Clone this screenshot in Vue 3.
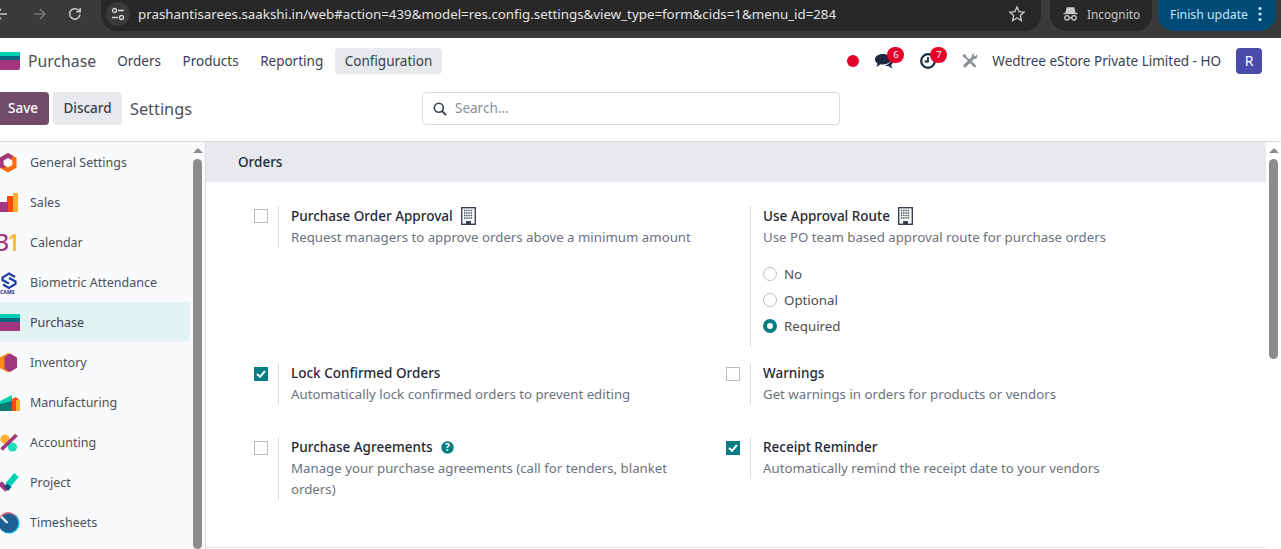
<template>
  <div class="page">
    <div class="browser-bar">
      <div class="nav-btns">
        <svg class="nav-ico back" width="16" height="16" viewBox="0 0 16 16"><path d="M14 8H3M8 3 3 8l5 5" fill="none" stroke="#c7c7c7" stroke-width="1.6"/></svg>
        <svg class="nav-ico forward" width="16" height="16" viewBox="0 0 16 16"><path d="M2 8h11M8 3l5 5-5 5" fill="none" stroke="#757575" stroke-width="1.6"/></svg>
        <svg class="nav-ico reload" width="16" height="16" viewBox="0 0 16 16"><path d="M13 8.500A5.200 5.200 0 1 1 11.600 4.300L13 5.600M13.200 2v3.800H9.400" fill="none" stroke="#c7c7c7" stroke-width="1.6"/></svg>
      </div>
      <div class="url-pill">
        <span class="site-info">
          <svg width="14" height="14" viewBox="0 0 14 14"><g fill="none" stroke="#d5d5d5" stroke-width="1.3"><circle cx="3.500" cy="3.500" r="2"/><path d="M7 3.500h6M1 10.500h6"/><circle cx="10.500" cy="10.500" r="2"/></g></svg>
        </span>
        <span class="url">prashantisarees.saakshi.in/web#action=439&amp;model=res.config.settings&amp;view_type=form&amp;cids=1&amp;menu_id=284</span>
        <svg class="star" width="18" height="18" viewBox="0 0 18 18"><path d="m9 2 2.100 4.700 5 .5-3.800 3.400 1.100 5L9 13l-4.400 2.600 1.100-5L1.900 7.200l5-.5z" fill="none" stroke="#c7c7c7" stroke-width="1.4"/></svg>
      </div>
      <div class="incognito">
        <svg width="15" height="14" viewBox="0 0 15 14"><g fill="none" stroke="#c7c7c7" stroke-width="1.300"><path d="M.5 6.500h14"/><path d="M3 6l1.200-5h6.600L12 6" fill="#c7c7c7"/><circle cx="4" cy="10.800" r="2.200"/><circle cx="11" cy="10.800" r="2.200"/><path d="M6.200 10.800h2.600"/></g></svg>
        <span>Incognito</span>
      </div>
      <div class="finish">
        <span>Finish update</span>
        <svg width="4" height="16" viewBox="0 0 4 16"><g fill="#c2e7ff"><circle cx="2" cy="2.500" r="1.600"/><circle cx="2" cy="8" r="1.600"/><circle cx="2" cy="13.500" r="1.600"/></g></svg>
      </div>
    </div>

    <header class="navbar">
      <svg class="brand-ico" width="20" height="18" viewBox="0 0 20 18"><path d="M0 0h20v4H0z" fill="#00d1b5"/><path d="M0 4h20v4H0z" fill="#0c6680"/><path d="M0 8h20v8a2 2 0 0 1-2 2H0z" fill="#a2367f"/></svg>
      <span class="brand">Purchase</span>
      <nav class="menu">
        <a v-for="m in menus" :key="m" class="menu-item" :class="{ active: m === 'Configuration' }">{{ m }}</a>
      </nav>
      <div class="systray">
        <span class="red-dot"></span>
        <span class="tray-ico chat">
          <svg width="20" height="18" viewBox="0 0 20 18"><path d="M9 2C4.300 2 1 4.300 1 7.500c0 1.700 1 3.100 2.500 4L2.500 15l4-2.700c.8.200 1.600.2 2.500.2 4.500 0 8-2.300 8-5.200S13.500 2 9 2z" fill="#1c2840"/><path d="M17.200 6.500c1.200.8 1.800 1.900 1.800 3.300 0 1.300-.7 2.400-1.800 3.200l.9 3.500-3.800-2.600c-1.300.1-2.600 0-3.700-.5 3.500-.4 6.700-2.900 6.600-6.900z" fill="#1c2840"/></svg>
          <b class="badge">6</b>
        </span>
        <span class="tray-ico clock">
          <svg width="18" height="18" viewBox="0 0 18 18"><circle cx="9" cy="9" r="6.800" fill="none" stroke="#1c2840" stroke-width="2.200"/><path d="M9 5v4.500H5.500" fill="none" stroke="#1c2840" stroke-width="1.800"/></svg>
          <b class="badge">7</b>
        </span>
        <svg class="tools" width="16" height="16" viewBox="0 0 16 16">
          <g fill="#8a8f98">
            <path d="M1.500 1 4 2.200l.6 1.700 9.900 8.800-1.900 2.100L3.300 5.200 1.700 4.600.6 2.200z"/>
            <path d="M15 1.300 12.800 3.500 12 3l-.4-1.200L13.300.6C11.200.2 9.400 1.800 9.800 4l-8 7.800a1.500 1.500 0 0 0 2.200 2.200l8-8c2.200.6 3.900-1.200 3-4.700z"/>
          </g>
        </svg>
        <span class="company">Wedtree eStore Private Limited - HO</span>
        <span class="avatar">R</span>
      </div>
    </header>

    <div class="control-panel">
      <div class="cp-left">
        <button class="btn save"><span>Save</span></button>
        <button class="btn discard"><span>Discard</span></button>
        <span class="cp-title">Settings</span>
      </div>
      <div class="search">
        <svg width="14" height="14" viewBox="0 0 14 14"><circle cx="5.800" cy="5.800" r="4.500" fill="none" stroke="#374151" stroke-width="1.600"/><path d="m9 9 4.200 4.200" stroke="#374151" stroke-width="1.800"/></svg>
        <span>Search...</span>
      </div>
    </div>

    <div class="body">
      <aside class="sidebar">
        <div class="side-list">
          <div v-for="app in apps" :key="app.name" class="side-item" :class="{ active: app.name === 'Purchase' }">
            <svg class="app-ico" width="20" height="24" viewBox="0 0 20 24">
              <template v-for="(s, i) in app.shapes" :key="i">
                <circle v-if="s.r" :cx="s.cx" :cy="s.cy" :r="s.r" :fill="s.fill" />
                <path v-else :d="s.d" :fill="s.fill || 'none'" :stroke="s.stroke" :stroke-width="s.sw" />
              </template>
              <text v-if="app.name === 'Calendar'" class="cal-num" x="-4" y="20.500"><tspan fill="#a2367f">3</tspan><tspan fill="#fbb130">1</tspan></text>
              <text v-if="app.name === 'Biometric Attendance'" class="cams" x="0" y="24">CAMS</text>
            </svg>
            <span>{{ app.name }}</span>
          </div>
        </div>
        <div class="fake-scroll">
          <i class="arrow"></i>
          <i class="thumb long"></i>
        </div>
      </aside>

      <main class="content">
        <div class="content-inner">
          <h2 class="section-title">Orders</h2>
          <div class="settings-grid">
            <div v-for="s in settings" :key="s.title" class="setting">
              <div class="check-col">
                <span v-if="s.check !== undefined" class="check" :class="{ on: s.check }">
                  <svg v-if="s.check" width="10" height="8" viewBox="0 0 10 8"><path d="M1 4l3 2.800L9 1" fill="none" stroke="#fff" stroke-width="2"/></svg>
                </span>
              </div>
              <div class="text-col">
                <div class="s-title">
                  {{ s.title }}
                  <svg v-if="s.building" class="building" width="15" height="18" viewBox="0 0 15 18">
                    <rect x=".7" y=".7" width="13.600" height="16.600" fill="none" stroke="#374151" stroke-width="1.400"/>
                    <path d="M3 3.500h9M3 6h9M3 8.500h9M3 11h9" stroke="#374151" stroke-width="1.300" stroke-dasharray="1.300 .9"/>
                    <path d="M5 14h5v3.500H5z" fill="#374151"/>
                  </svg>
                  <svg v-if="s.help" class="help" width="13" height="13" viewBox="0 0 13 13"><circle cx="6.500" cy="6.500" r="6.200" fill="#017e84"/><text class="help-mark" x="6.500" y="10">?</text></svg>
                </div>
                <p class="s-desc">{{ s.desc }}</p>
                <div v-if="s.radios" class="radios">
                  <label v-for="r in s.radios" :key="r" class="radio-row">
                    <span class="radio" :class="{ on: r === 'Required' }"></span>{{ r }}
                  </label>
                </div>
              </div>
            </div>
          </div>
        </div>
        <div class="fake-scroll">
          <i class="arrow"></i>
          <i class="thumb"></i>
        </div>
      </main>
    </div>
  </div>
</template>

<script setup>
const menus = ['Orders', 'Products', 'Reporting', 'Configuration']

const apps = [
  { name: 'General Settings', shapes: [
    { d: 'M8 3l8.500 4.700v10L8 22.500l-8.500-4.800v-10z', fill: '#fc6a0e' },
    { d: 'M8 3l5 2.800L5 17.500l-5.500.2v-10z', fill: '#a2367f' },
    { d: 'M8 8l4.300 2.400v4.600L8 17.400 3.700 15v-4.600z', fill: '#fff' }
  ] },
  { name: 'Sales', shapes: [
    { d: 'M13 3h5v19h-5z', fill: '#fbb130' },
    { d: 'M7 6h6v16H7z', fill: '#fc4a0e' },
    { d: 'M0 12h8v10H0z', fill: '#a2367f' }
  ] },
  { name: 'Calendar', shapes: [] },
  { name: 'Biometric Attendance', shapes: [
    { d: 'M15 7 9 3.500 2.500 7.500V10L9 13.500', stroke: '#1c3fa8', sw: 2.200 },
    { d: 'M3 14.500 9 18l6.500-4v-2.500L9 8', stroke: '#1c3fa8', sw: 2.200 }
  ] },
  { name: 'Purchase', shapes: [
    { d: 'M0 4h20v4H0z', fill: '#00d1b5' },
    { d: 'M0 8h20v4H0z', fill: '#0c6680' },
    { d: 'M0 12h20v8a1 1 0 0 1-1 1H0z', fill: '#a2367f' }
  ] },
  { name: 'Inventory', shapes: [
    { d: 'M8 3l8.500 4.700v10L8 22.500l-8.500-4.800v-10z', fill: '#fc8a0e' },
    { d: 'M10 3.500l7 4v10.300l-7 4.200-5.500-3V7z', fill: '#a2367f' }
  ] },
  { name: 'Manufacturing', shapes: [
    { d: 'M0 11 12 5v16H0z', fill: '#00d1b5' },
    { d: 'M0 14l12-3v10H0z', fill: '#0c7c70' },
    { d: 'M12 9l4-2 4 4v10h-8z', fill: '#fc4a0e' },
    { d: 'M16 10h4v11h-4z', fill: '#fbb130' }
  ] },
  { name: 'Accounting', shapes: [
    { cx: 5, cy: 9, r: 4.600, fill: '#fbb130' },
    { cx: 12.500, cy: 17, r: 4.600, fill: '#1ddcbd' },
    { d: 'M16.500 5 1.500 19.500', stroke: '#a2367f', sw: 3.600 }
  ] },
  { name: 'Project', shapes: [
    { d: 'M0 13l7 7', stroke: '#a2367f', sw: 5 },
    { d: 'M16.500 5 8 15', stroke: '#00d1b5', sw: 6 },
    { d: 'M4 17l3-3.500 4.500 3.500-3.500 4z', fill: '#0c5080' }
  ] },
  { name: 'Timesheets', shapes: [
    { cx: 9, cy: 13, r: 10.500, fill: '#00b4f0' },
    { cx: 8, cy: 12, r: 10, fill: '#f06a7e' },
    { cx: 8.500, cy: 13, r: 9.500, fill: '#1f5f92' },
    { d: 'M1 6.500l6.500 6.500', stroke: '#eee', sw: 2.400 }
  ] }
]

const settings = [
  { title: 'Purchase Order Approval', desc: 'Request managers to approve orders above a minimum amount', check: false, building: true },
  { title: 'Use Approval Route', desc: 'Use PO team based approval route for purchase orders', building: true, radios: ['No', 'Optional', 'Required'] },
  { title: 'Lock Confirmed Orders', desc: 'Automatically lock confirmed orders to prevent editing', check: true },
  { title: 'Warnings', desc: 'Get warnings in orders for products or vendors', check: false },
  { title: 'Purchase Agreements', desc: 'Manage your purchase agreements (call for tenders, blanket orders)', check: false, help: true },
  { title: 'Receipt Reminder', desc: 'Automatically remind the receipt date to your vendors', check: true }
]
</script>

<style>
html, body { margin: 0; overflow: hidden; }
</style>

<style scoped>
.page {
  width: 1281px;
  height: 549px;
  overflow: hidden;
  background: #fff;
  font-family: "Noto Sans", "Open Sans", sans-serif;
  font-size: 13px;
  color: #374151;
  display: flex;
  flex-direction: column;
}

.browser-bar {
  height: 38px;
  flex: none;
  background: #3a3a3a;
  display: flex;
  align-items: flex-start;
  color: #e3e3e3;
}
.nav-btns {
  width: 101px;
  height: 31px;
  display: flex;
  align-items: center;
  flex: none;
  padding-bottom: 3px;
  box-sizing: border-box;
}
.nav-ico.back { margin-left: -7px; }
.nav-ico.forward { margin-left: 23px; }
.nav-ico.reload { margin-left: 19px; }
.url-pill {
  width: 940px;
  height: 31px;
  padding-bottom: 3px;
  box-sizing: border-box;
  background: #282828;
  border-radius: 0 0 16px 16px;
  display: flex;
  align-items: center;
  flex: none;
}
.site-info {
  width: 24px;
  height: 24px;
  margin-left: 5px;
  border-radius: 50%;
  background: #3a3a3a;
  display: flex;
  align-items: center;
  justify-content: center;
}
.url {
  margin-left: 8px;
  font-size: 13.32px;
  white-space: nowrap;
  width: 860px;
}
.star { margin-left: 10px; margin-top: -1px; }
.incognito {
  margin-left: 9px;
  width: 102px;
  height: 31px;
  background: #282828;
  border-radius: 0 0 16px 16px;
  display: flex;
  align-items: center;
  gap: 9px;
  padding: 0 0 3px 13px;
  box-sizing: border-box;
  font-size: 11.8px;
  color: #c7c7c7;
}
.finish {
  margin-left: 6px;
  width: 118px;
  height: 31px;
  background: #004a77;
  border-radius: 0 0 16px 16px;
  display: flex;
  align-items: center;
  padding: 0 0 3px 12px;
  gap: 10px;
  box-sizing: border-box;
  color: #c2e7ff;
  font-size: 12.3px;
  white-space: nowrap;
}

.navbar {
  height: 46px;
  flex: none;
  display: flex;
  align-items: center;
  background: #fff;
}
.brand-ico { flex: none; }
.brand {
  margin-left: 8px;
  font-size: 15.8px;
  color: #4a4f59;
}
.menu {
  display: flex;
  margin-left: 11px;
  gap: 1.5px;
}
.menu-item {
  padding: 0 10px;
  height: 26px;
  line-height: 26px;
  border-radius: 4px;
  font-size: 13.5px;
  color: #374151;
}
.menu-item.active { background: #e7e9ed; }
.systray {
  margin-left: auto;
  display: flex;
  align-items: center;
  padding-right: 19px;
}
.red-dot {
  width: 12px;
  height: 12px;
  border-radius: 50%;
  background: #e4002b;
}
.tray-ico {
  position: relative;
  display: flex;
}
.chat { margin-left: 15px; }
.clock { margin-left: 25px; }
.badge {
  position: absolute;
  top: -5px;
  left: 13px;
  width: 17px;
  height: 16px;
  border-radius: 8px;
  background: #e4002b;
  color: #fff;
  font-size: 9.5px;
  font-weight: 400;
  line-height: 16px;
  text-align: center;
}
.clock .badge { left: 11px; }
.tools { margin-left: 25px; }
.company {
  margin-left: 14px;
  font-size: 13.5px;
  white-space: nowrap;
}
.avatar {
  margin-left: 15px;
  width: 26px;
  height: 26px;
  border-radius: 4px;
  background: #4a4aa8;
  color: #fff;
  font-size: 14px;
  line-height: 26px;
  text-align: center;
}

.control-panel {
  height: 57px;
  flex: none;
  display: flex;
  align-items: flex-start;
  padding-top: 8px;
  box-sizing: border-box;
}
.cp-left {
  display: flex;
  align-items: center;
  gap: 4px;
  width: 422px;
  flex: none;
}
.btn {
  height: 33px;
  border: none;
  border-radius: 4px;
  font: inherit;
  font-size: 13.5px;
  font-weight: 500;
  padding: 0 0 2px;
}
.save {
  width: 60px;
  margin-left: -11px;
  padding-left: 8px;
  background: #714b67;
  color: #fff;
}
.discard {
  width: 69px;
  background: #e7e9ed;
  color: #374151;
}
.cp-title {
  margin-left: 4px;
  font-size: 16.3px;
  color: #4a4f59;
}
.search {
  width: 418px;
  height: 33px;
  box-sizing: border-box;
  border: 1px solid #d8dadd;
  border-radius: 4px;
  display: flex;
  align-items: center;
  padding-left: 10px;
  gap: 8px;
  color: #8a8f98;
  font-size: 13.5px;
}
.search span { margin-top: -2px; }

.body {
  flex: 1;
  min-height: 0;
  display: flex;
  border-top: 1px solid #d8dadd;
}
.sidebar {
  width: 205px;
  flex: none;
  background: #f9fafb;
  border-right: 1px solid #d8dadd;
  display: flex;
  overflow: hidden;
}
.side-list {
  width: 190px;
  flex: none;
}
.side-item {
  height: 40px;
  display: flex;
  align-items: center;
  gap: 10px;
  font-size: 12.5px;
  color: #4a4f59;
  white-space: nowrap;
}
.side-item.active {
  background: #e3f3f3;
  color: #374151;
}
.app-ico { flex: none; overflow: visible; }
.cal-num { font-size: 23px; font-weight: 500; letter-spacing: -2px; }
.cams { font-size: 5.2px; font-weight: 700; fill: #2a2a7a; }

.fake-scroll {
  width: 15px;
  flex: none;
  display: flex;
  flex-direction: column;
  align-items: center;
  padding-top: 6px;
  box-sizing: border-box;
}
.arrow {
  width: 0;
  height: 0;
  border-left: 5px solid transparent;
  border-right: 5px solid transparent;
  border-bottom: 5px solid #8c8c8c;
}
.thumb {
  display: block;
  width: 9px;
  height: 200px;
  margin-top: 6px;
  border-radius: 5px;
  background: #8c8c8c;
}
.thumb.long { height: 420px; }

.content {
  flex: 1;
  min-width: 0;
  display: flex;
  overflow: hidden;
}
.content-inner {
  width: 1060px;
  flex: none;
}
.section-title {
  margin: 0;
  height: 40px;
  line-height: 40px;
  padding-left: 32px;
  background: #e7e9ed;
  font-size: 13.5px;
  font-weight: 500;
  color: #1f2937;
}
.settings-grid {
  display: grid;
  grid-template-columns: 472px 472px;
  grid-template-rows: 157px 74px auto;
  align-content: start;
  box-sizing: border-box;
  height: 366px;
  padding: 24px 0 0 24px;
  border-bottom: 1px solid #e7e9ed;
}
.setting {
  display: flex;
  align-items: flex-start;
}
.check-col {
  width: 48px;
  flex: none;
  display: flex;
  justify-content: flex-end;
  padding: 3px 10px 0 0;
  box-sizing: border-box;
}
.setting:nth-child(n+3) .check-col { padding-top: 4px; }
.check {
  width: 14px;
  height: 14px;
  box-sizing: border-box;
  border: 1px solid #b9bcc1;
  background: #fff;
  display: flex;
  align-items: center;
  justify-content: center;
}
.check.on {
  background: #017e84;
  border-color: #017e84;
}
.text-col {
  flex: 1;
  border-left: 1px solid #d8dadd;
  padding-left: 12px;
  box-sizing: border-box;
}
.s-title {
  font-size: 13.5px;
  font-weight: 500;
  color: #1f2937;
  line-height: 21px;
  display: flex;
  align-items: center;
  gap: 8px;
}
.building { margin-top: -2px; }
.s-desc {
  margin: 0;
  font-size: 13.25px;
  line-height: 21px;
  color: #6b7280;
}
.radios {
  margin-top: 13px;
  padding-bottom: 8px;
}
.radio-row {
  height: 26px;
  display: flex;
  align-items: center;
  gap: 7px;
  font-size: 13.3px;
  color: #4a4f59;
}
.radio {
  width: 14px;
  height: 14px;
  box-sizing: border-box;
  border-radius: 50%;
  border: 1px solid #b9bcc1;
  background: #fff;
}
.radio.on {
  border: 4px solid #017e84;
}
.help-mark {
  fill: #fff;
  font-size: 10px;
  font-weight: 700;
  text-anchor: middle;
}
</style>
